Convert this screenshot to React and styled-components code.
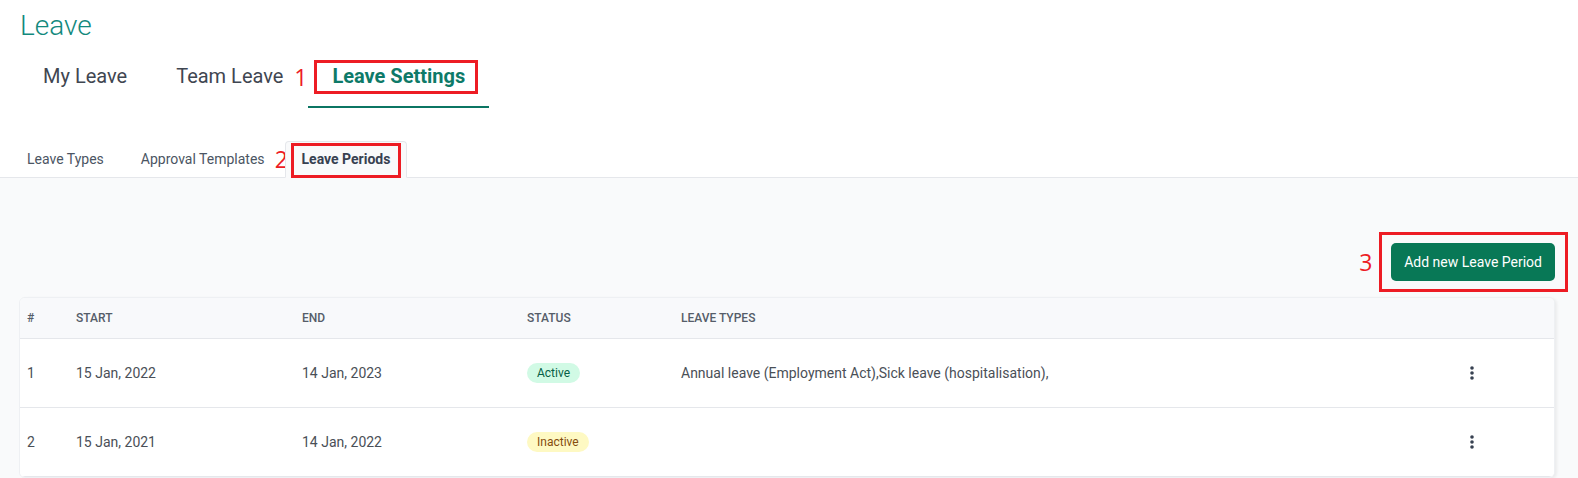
import React from 'react';
import styled, { createGlobalStyle } from 'styled-components';

const GlobalStyle = createGlobalStyle`
  body {
    margin: 0;
    background: #ffffff;
    font-family: Roboto, "Noto Sans", "Liberation Sans", sans-serif;
    color: #3f4651;
  }
`;

const Page = styled.div`
  min-height: 478px;
  display: flex;
  flex-direction: column;
`;

const Title = styled.h1`
  margin: 9px 0 0 20px;
  font-size: 28px;
  font-weight: 300;
  line-height: 33px;
  color: #13897d;
`;

const MainTabs = styled.div`
  display: flex;
  gap: 1px;
  padding-left: 19px;
`;

const MainTab = styled.div`
  position: relative;
  padding: 22px 24px 18px;
  font-size: 20px;
  line-height: 24px;
  font-weight: ${(p) => (p.$active ? 700 : 400)};
  color: ${(p) => (p.$active ? '#0e7a68' : '#3f4651')};
  border-bottom: 2px solid ${(p) => (p.$active ? '#0b7563' : 'transparent')};
`;

const SubTabs = styled.div`
  display: flex;
  gap: 3px;
  margin-top: 33px;
  padding-left: 10px;
  border-bottom: 1px solid #e5e7eb;
`;

const SubTab = styled.div`
  position: relative;
  padding: 9px 16px 10px;
  margin-bottom: -1px;
  font-size: 14px;
  line-height: 16px;
  font-weight: ${(p) => (p.$active ? 700 : 400)};
  color: ${(p) => (p.$active ? '#374151' : '#4b5563')};
  background: ${(p) => (p.$active ? '#f9fafb' : 'transparent')};
  border: 1px solid ${(p) => (p.$active ? '#e5e7eb' : 'transparent')};
  border-bottom: 1px solid ${(p) => (p.$active ? '#f9fafb' : 'transparent')};
  border-radius: 4px 4px 0 0;
`;

const Content = styled.div`
  flex: 1;
  background: #f9fafb;
  padding: 65px 23px 0 19px;
`;

const Actions = styled.div`
  display: flex;
  justify-content: flex-end;
  margin-bottom: 16px;
`;

const PrimaryButton = styled.button`
  position: relative;
  height: 38px;
  padding: 0 13px;
  border: none;
  border-radius: 5px;
  background: #087856;
  color: #ffffff;
  font-family: Roboto, "Liberation Sans", sans-serif;
  font-size: 14px;
  font-weight: 400;
  cursor: pointer;
`;

const Mark = styled.span`
  position: absolute;
  top: ${(p) => p.$top}px;
  right: ${(p) => p.$right}px;
  bottom: ${(p) => p.$bottom}px;
  left: ${(p) => p.$left}px;
  border: 3px solid #ed1c24;
  pointer-events: none;
`;

const MarkNumber = styled.span`
  position: absolute;
  top: ${(p) => p.$top}px;
  left: ${(p) => p.$left}px;
  font-family: "Open Sans", "Liberation Sans", sans-serif;
  font-size: 23px;
  line-height: 24px;
  font-weight: 400;
  color: #ed1c24;
`;

const Card = styled.div`
  background: #ffffff;
  border: 1px solid #eef0f3;
  border-radius: 6px;
  box-shadow: 2px 1px 3px rgba(0, 0, 0, 0.06);
  overflow: hidden;
`;

const Row = styled.div`
  display: grid;
  grid-template-columns: 47px 226px 225px 154px 1fr 174px;
  align-items: center;
  height: ${(p) => (p.$head ? 40 : 68)}px;
  background: ${(p) => (p.$head ? '#f8f9fb' : '#ffffff')};
  border-bottom: 1px solid #e5e7eb;
`;

const HeadCell = styled.div`
  padding-left: ${(p) => (p.$first ? 7 : 9)}px;
  font-size: 12px;
  font-weight: 500;
  text-transform: uppercase;
  color: #555d69;
`;

const Cell = styled.div`
  padding-left: ${(p) => (p.$first ? 7 : 9)}px;
  font-size: 14px;
  color: #4a4f57;
  display: flex;
  justify-content: ${(p) => (p.$center ? 'center' : 'flex-start')};
`;

const Badge = styled.span`
  display: inline-block;
  height: 20px;
  line-height: 20px;
  padding: 0 10px;
  border-radius: 10px;
  font-size: 12px;
  font-weight: 400;
  background: ${(p) => (p.$active ? '#d1fae5' : '#fef9c3')};
  color: ${(p) => (p.$active ? '#065f46' : '#854d0e')};
`;

const KebabButton = styled.button`
  border: none;
  background: none;
  padding: 0;
  display: flex;
  cursor: pointer;
`;

function Kebab() {
  return (
    <KebabButton aria-label="actions">
      <svg width="4" height="14" viewBox="0 0 4 14">
        <circle cx="2" cy="2" r="1.8" fill="#374151" />
        <circle cx="2" cy="7" r="1.8" fill="#374151" />
        <circle cx="2" cy="12" r="1.8" fill="#374151" />
      </svg>
    </KebabButton>
  );
}

const periods = [
  {
    id: 1,
    start: '15 Jan, 2022',
    end: '14 Jan, 2023',
    active: true,
    types: 'Annual leave (Employment Act),Sick leave (hospitalisation),',
  },
  { id: 2, start: '15 Jan, 2021', end: '14 Jan, 2022', active: false, types: '' },
];

export default function App() {
  return (
    <Page>
      <GlobalStyle />
      <Title>Leave</Title>
      <MainTabs>
        <MainTab>My Leave</MainTab>
        <MainTab>
          Team Leave
          <MarkNumber $top={23} $left={142}>1</MarkNumber>
        </MainTab>
        <MainTab $active>
          Leave Settings
          <Mark $top={18} $right={11} $bottom={12} $left={6} />
        </MainTab>
      </MainTabs>

      <SubTabs>
        <SubTab>Leave Types</SubTab>
        <SubTab>
          Approval Templates
          <MarkNumber $top={5} $left={150}>2</MarkNumber>
        </SubTab>
        <SubTab $active>
          Leave Periods
          <Mark $top={1} $right={5} $bottom={-1} $left={5} />
        </SubTab>
      </SubTabs>

      <Content>
        <Actions>
          <PrimaryButton>
            Add new Leave Period
            <Mark $top={-11} $right={-13} $bottom={-11} $left={-12} />
            <MarkNumber $top={7} $left={-32}>3</MarkNumber>
          </PrimaryButton>
        </Actions>

        <Card>
          <Row $head>
            <HeadCell $first>#</HeadCell>
            <HeadCell>Start</HeadCell>
            <HeadCell>End</HeadCell>
            <HeadCell>Status</HeadCell>
            <HeadCell>Leave Types</HeadCell>
            <HeadCell />
          </Row>
          {periods.map((p) => (
            <Row key={p.id}>
              <Cell $first>{p.id}</Cell>
              <Cell>{p.start}</Cell>
              <Cell>{p.end}</Cell>
              <Cell>
                <Badge $active={p.active}>{p.active ? 'Active' : 'Inactive'}</Badge>
              </Cell>
              <Cell>{p.types}</Cell>
              <Cell $center>
                <Kebab />
              </Cell>
            </Row>
          ))}
        </Card>
      </Content>
    </Page>
  );
}
